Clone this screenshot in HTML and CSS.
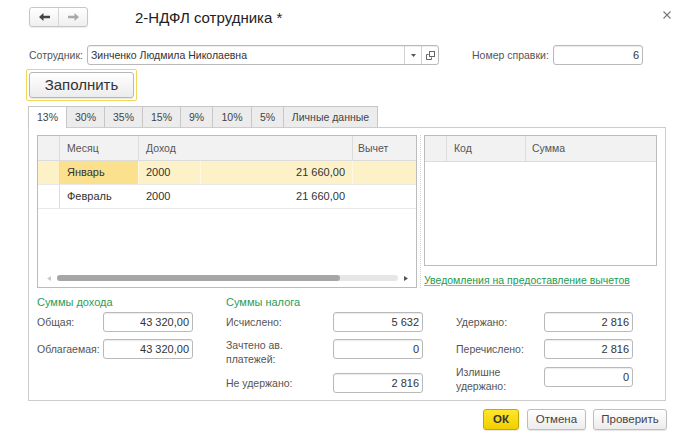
FILE: index.html
```html
<!DOCTYPE html>
<html lang="ru">
<head>
<meta charset="utf-8">
<title>2-НДФЛ сотрудника</title>
<link rel="stylesheet" href="styles.css">
</head>
<body>
<div class="dialog">
  <div class="header">
    <div class="nav">
      <div class="nav-btn">
        <svg width="11" height="8" viewBox="0 0 11 8"><path d="M0 4 L4.5 0 V2.8 H11 V5.2 H4.5 V8 Z" fill="#444"/></svg>
      </div>
      <div class="nav-btn">
        <svg width="11" height="8" viewBox="0 0 11 8"><path d="M11 4 L6.5 0 V2.8 H0 V5.2 H6.5 V8 Z" fill="#a9a9a9"/></svg>
      </div>
    </div>
    <div class="title">2-НДФЛ сотрудника *</div>
    <div class="close">
      <svg width="8" height="8" viewBox="0 0 8 8"><path d="M0.5 0.5 L7.5 7.5 M7.5 0.5 L0.5 7.5" stroke="#777" stroke-width="1.1"/></svg>
    </div>
  </div>

  <div class="emp-row">
    <div class="lbl-emp">Сотрудник:</div>
    <div class="combo">
      <div class="combo-text">Зинченко Людмила Николаевна</div>
      <div class="combo-btn">
        <svg width="5" height="3" viewBox="0 0 5 3"><path d="M0 0 H5 L2.5 3 Z" fill="#555"/></svg>
      </div>
      <div class="combo-btn">
        <svg width="9" height="9" viewBox="0 0 9 9"><rect x="3.5" y="0.5" width="5" height="5" fill="none" stroke="#666"/><path d="M2.5 3.5 H0.5 V8.5 H5.5 V6.5" fill="none" stroke="#666"/></svg>
      </div>
    </div>
    <div class="lbl-num">Номер справки:</div>
    <div class="field num-field">6</div>
  </div>

  <div class="fill-wrap">
    <div class="fill-btn">Заполнить</div>
  </div>

  <div class="tabs">
    <div class="tab w38 active">13%</div>
    <div class="tab w38">30%</div>
    <div class="tab w38">35%</div>
    <div class="tab w38">15%</div>
    <div class="tab w32">9%</div>
    <div class="tab w39">10%</div>
    <div class="tab w32">5%</div>
    <div class="tab w94">Личные данные</div>
  </div>

  <div class="panel">
    <div class="top">
      <div class="tbl-left">
        <div class="thead">
          <div class="hc c0"></div>
          <div class="hc c1">Месяц</div>
          <div class="hc c2h">Доход</div>
          <div class="hc c4">Вычет</div>
        </div>
        <div class="trow sel">
          <div class="tc c0"></div>
          <div class="tc c1 cur">Январь</div>
          <div class="tc c2">2000</div>
          <div class="tc c3">21 660,00</div>
          <div class="tc c4"></div>
        </div>
        <div class="trow">
          <div class="tc c0"></div>
          <div class="tc c1">Февраль</div>
          <div class="tc c2">2000</div>
          <div class="tc c3">21 660,00</div>
          <div class="tc c4"></div>
        </div>
        <div class="tspacer"></div>
        <div class="hscroll">
          <svg class="arr" width="4" height="5" viewBox="0 0 4 5"><path d="M4 0 V5 L0 2.5 Z" fill="#c8c8c8"/></svg>
          <div class="track"><div class="thumb"></div></div>
          <svg class="arr" width="4" height="5" viewBox="0 0 4 5"><path d="M0 0 V5 L4 2.5 Z" fill="#555"/></svg>
        </div>
      </div>
      <div class="sep"></div>
      <div class="right-col">
        <div class="tbl-right">
          <div class="thead rh">
            <div class="hc c0"></div>
            <div class="hc rc1">Код</div>
            <div class="hc rc2">Сумма</div>
          </div>
        </div>
        <a class="link" href="#">Уведомления на предоставление вычетов</a>
      </div>
    </div>

    <div class="sums">
      <div class="group g1">
        <div class="gh">Суммы дохода</div>
        <div class="frow"><div class="lbl">Общая:</div><div class="field">43 320,00</div></div>
        <div class="frow"><div class="lbl">Облагаемая:</div><div class="field">43 320,00</div></div>
      </div>
      <div class="group g2">
        <div class="gh">Суммы налога</div>
        <div class="frow"><div class="lbl">Исчислено:</div><div class="field">5 632</div></div>
        <div class="frow"><div class="lbl two">Зачтено ав.<br>платежей:</div><div class="field">0</div></div>
        <div class="frow"><div class="lbl">Не удержано:</div><div class="field">2 816</div></div>
      </div>
      <div class="group g3">
        <div class="gh"></div>
        <div class="frow"><div class="lbl">Удержано:</div><div class="field">2 816</div></div>
        <div class="frow"><div class="lbl">Перечислено:</div><div class="field">2 816</div></div>
        <div class="frow"><div class="lbl two">Излишне<br>удержано:</div><div class="field">0</div></div>
      </div>
    </div>
  </div>

  <div class="footer">
    <div class="btn ok">ОК</div>
    <div class="btn cancel">Отмена</div>
    <div class="btn check">Проверить</div>
  </div>
</div>
</body>
</html>
```

FILE: styles.css
```css
* { box-sizing: border-box; }

body {
  margin: 0;
  width: 700px;
  height: 436px;
  background: #fff;
  font-family: "Liberation Sans", Arial, sans-serif;
  font-size: 11px;
  color: #333;
  overflow: hidden;
}

.dialog {
  display: flex;
  flex-direction: column;
  padding: 7px 34px 0 28px;
}

/* header */
.header {
  display: flex;
  align-items: center;
  height: 20px;
}
.nav {
  display: flex;
  margin-left: 1px;
  width: 59px;
  height: 20px;
  border: 1px solid #c6c6c6;
  border-radius: 3px;
  background: linear-gradient(#ffffff, #efefef);
  box-shadow: 0 1px 1px rgba(0,0,0,0.08);
}
.nav-btn {
  flex: 1;
  display: flex;
  align-items: center;
  justify-content: center;
}
.nav-btn + .nav-btn { border-left: 1px solid #d6d6d6; }
.title {
  margin-left: 47px;
  font-size: 15px;
  color: #222;
  line-height: 20px;
  padding-top: 2px;
}
.close {
  margin-left: auto;
  margin-right: -5px;
  width: 8px;
  height: 8px;
  display: flex;
  margin-top: -4px;
}

/* employee row */
.emp-row {
  display: flex;
  align-items: center;
  margin-top: 18px;
  height: 20px;
}
.lbl-emp {
  width: 59px;
  padding-left: 1px;
  color: #555;
  font-size: 10.5px;
}
.combo {
  display: flex;
  width: 352px;
  height: 20px;
  border: 1px solid #b9b9b9;
  border-radius: 3px;
  background: #fff;
  box-shadow: inset 0 1px 1px rgba(0,0,0,0.07);
}
.combo-text {
  flex: 1;
  padding-left: 3px;
  line-height: 18px;
  color: #333;
  font-size: 10.5px;
}
.combo-btn {
  width: 17px;
  border-left: 1px solid #d0d0d0;
  display: flex;
  align-items: center;
  justify-content: center;
}
.lbl-num {
  margin-left: 33px;
  width: 81px;
  color: #555;
  font-size: 10.5px;
}
.field {
  width: 90px;
  height: 20px;
  border: 1px solid #b9b9b9;
  border-radius: 3px;
  background: #fff;
  box-shadow: inset 0 1px 1px rgba(0,0,0,0.08);
  text-align: right;
  padding-right: 3px;
  line-height: 18px;
  color: #333;
  font-size: 11px;
}

/* fill button */
.fill-wrap {
  margin-top: 4px;
  margin-left: -2px;
  width: 111px;
  height: 32px;
  border: 1px solid #f2d65a;
  border-radius: 2px;
  padding: 2px;
}
.fill-btn {
  height: 26px;
  border: 1px solid #b8b8b8;
  border-radius: 3px;
  background: linear-gradient(#ffffff, #ececec);
  box-shadow: 0 1px 1px rgba(0,0,0,0.1);
  font-size: 15px;
  color: #333;
  text-align: center;
  line-height: 24px;
}

/* tabs */
.tabs {
  display: flex;
  margin-top: 5px;
  height: 21px;
  position: relative;
  z-index: 1;
}
.tab {
  height: 21px;
  text-align: center;
  line-height: 20px;
  background: #ececec;
  border: 1px solid #c6c6c6;
  border-left: none;
  border-bottom: none;
  color: #444;
  font-size: 10.5px;
  white-space: nowrap;
}
.tab:first-child { border-left: 1px solid #c6c6c6; }
.tab.active {
  background: #fff;
  height: 22px;
}
.w32 { width: 32px; }
.w38 { width: 38px; }
.w39 { width: 39px; }
.w94 { width: 94px; }
.tab:first-child.w38 { width: 39px; }

/* panel */
.panel {
  width: 638px;
  border: 1px solid #cdcdcd;
  padding: 7px 7px 7px 8px;
}
.top {
  display: flex;
  align-items: flex-start;
}
.tbl-left {
  width: 380px;
  height: 153px;
  border: 1px solid #bcbcbc;
  display: flex;
  flex-direction: column;
}
.thead {
  display: flex;
  height: 25px;
  background: #f2f2f2;
  border-bottom: 1px solid #dcdcdc;
}
.hc {
  line-height: 24px;
  color: #555;
  border-right: 1px solid #dcdcdc;
  padding-left: 7px;
  white-space: nowrap;
  font-size: 10.5px;
}
.c0 { width: 22px; padding: 0; }
.c1 { width: 79px; }
.c2h { width: 214px; }
.c2 { width: 62px; }
.c3 { width: 152px; text-align: right; padding-right: 7px; }
.c4 { flex: 1; border-right: none; padding-left: 5px; }

.trow {
  display: flex;
  height: 24px;
  border-bottom: 1px solid #e8e8e8;
}
.tc {
  line-height: 23px;
  padding-left: 7px;
  border-right: 1px solid transparent;
  color: #333;
  font-size: 11px;
}
.tc.c0 { border-right: 1px solid #dcdcdc; padding: 0; }
.tc.c3 { padding-left: 0; padding-right: 7px; }
.trow.sel { background: #fdf1c7; }
.trow.sel .tc { border-right-color: #fff8e2; }
.trow.sel .tc.c0 { border-right-color: #dcdcdc; }
.trow.sel .tc.c4 { border-right: none; }
.tc.cur { background: #fbe08d; }
.tspacer { flex: 1; }
.hscroll {
  display: flex;
  align-items: center;
  height: 14px;
  padding: 0 8px 4px 9px;
}
.arr { flex: none; }
.track {
  flex: 1;
  height: 6px;
  margin: 0 6px 0 6px;
  background: #e6e6e6;
  border-radius: 3px;
}
.thumb {
  width: 283px;
  height: 6px;
  border-radius: 3px;
  background: #a6a6a6;
}

.sep {
  width: 1px;
  height: 153px;
  margin: 0 3px;
  border-left: 1px dotted #cfcfcf;
}
.right-col {
  display: flex;
  flex-direction: column;
}
.tbl-right {
  width: 233px;
  height: 131px;
  border: 1px solid #bcbcbc;
}
.rh { height: 26px; }
.rh .hc { line-height: 25px; }
.rc1 { width: 79px; }
.rc2 { flex: 1; border-right: none; padding-left: 6px; }
.link {
  margin-top: 7px;
  line-height: 14px;
  color: #1e9a4e;
  text-decoration: underline;
  text-decoration-color: #6fc794;
  font-size: 10.5px;
}

/* sums */
.sums {
  display: flex;
  gap: 33px;
  margin-top: 7px;
}
.group {
  display: flex;
  flex-direction: column;
  gap: 7px;
}
.gh {
  height: 14px;
  line-height: 14px;
  font-size: 11px;
  color: #2e9b57;
  margin-bottom: -4px;
}
.frow {
  display: flex;
  align-items: flex-start;
}
.lbl {
  line-height: 20px;
  color: #555;
  font-size: 10.5px;
}
.lbl.two { line-height: 14px; margin-top: -1px; }
.g1 .lbl { width: 66px; }
.g2 .lbl { width: 107px; }
.g3 .lbl { width: 88px; }
.g3 .field { width: 89px; }
.g3 .frow:last-child .field { margin-top: 1px; }

/* footer */
.footer {
  display: flex;
  justify-content: flex-end;
  margin-top: 8px;
  margin-right: -1px;
  gap: 8px;
}
.btn {
  height: 21px;
  line-height: 19px;
  border: 1px solid #bdbdbd;
  border-radius: 3px;
  background: linear-gradient(#ffffff, #ececec);
  box-shadow: 0 1px 1px rgba(0,0,0,0.1);
  text-align: center;
  font-size: 11.5px;
  color: #444;
}
.btn.ok {
  width: 36px;
  background: linear-gradient(#ffe62e, #f1cf00);
  border-color: #c4a800;
  font-weight: bold;
  color: #333;
}
.btn.cancel { width: 59px; }
.btn.check { width: 74px; margin-left: -1px; }
```
